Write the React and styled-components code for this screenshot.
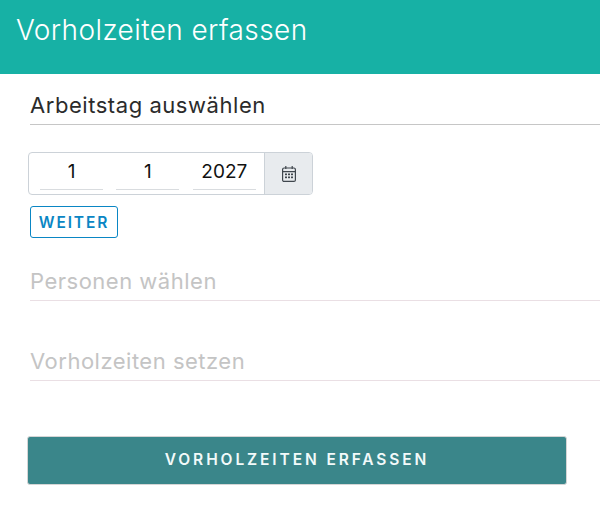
import React from "react";
import styled, { createGlobalStyle } from "styled-components";

const Global = createGlobalStyle`
  html, body { margin: 0; padding: 0; background: #fff; }
  body { font-family: Inter, "Liberation Sans", sans-serif; width: 600px; height: 512px; overflow: hidden; }
`;

const Header = styled.header`
  height: 74px;
  background: #17b1a5;
  padding: 14px 0 0 16px;
  box-sizing: border-box;
`;
const Title = styled.h1`
  margin: 0;
  font-size: 28px;
  line-height: 33px;
  font-weight: 300;
  color: #fff;
  letter-spacing: 0.4px;
`;
const Main = styled.main`
  padding: 18px 0 0 30px;
`;
const SectionHead = styled.h2`
  margin: 0 0 ${p => p.$gap}px;
  height: ${p => p.$h}px;
  box-sizing: border-box;
  border-bottom: 1px solid ${p => (p.$muted ? "#eadfe4" : "#c6c6c6")};
  font-size: 22px;
  line-height: ${p => (p.$muted ? 35 : 27)}px;
  font-weight: 400;
  letter-spacing: ${p => (p.$muted ? 0.5 : 0.55)}px;
  color: ${p => (p.$muted ? "#c4c4c4" : "#2b2b2b")};
`;
const DateGroup = styled.div`
  display: flex;
  width: 285px;
  height: 43px;
  margin-left: -2px;
  box-sizing: border-box;
  border: 1px solid #ccd2d8;
  border-radius: 4px;
  overflow: hidden;
`;
const Fields = styled.div`
  flex: 1;
  min-width: 0;
  display: flex;
  gap: 13.4px;
  padding-left: 11px;
`;
const Field = styled.div`
  flex: none;
  width: 63px;
  height: 37px;
  box-sizing: border-box;
  border-bottom: 1px solid #d9dcdf;
  text-align: center;
  font-size: 19px;
  line-height: 37px;
  color: #111;
`;
const Addon = styled.div`
  width: 48px;
  box-sizing: border-box;
  flex: none;
  display: flex;
  align-items: center;
  justify-content: center;
  background: #e8ebee;
  border-left: 1px solid #ccd2d8;
  color: #3f464d;
`;
const NextButton = styled.button`
  display: block;
  width: 88px;
  height: 32px;
  margin: 11px 0 26px;
  padding: 0;
  background: #fff;
  border: 1px solid #0a86c4;
  border-radius: 3px;
  color: #0a86c4;
  font: 600 15.5px Inter, "Liberation Sans", sans-serif;
  letter-spacing: 1.9px;
`;
const Submit = styled.button`
  display: block;
  width: 540px;
  height: 49px;
  margin: 55px 0 0 -3px;
  padding: 0 0 3px;
  background: #3a868a;
  border: 1px solid #d5d5d5;
  border-radius: 3px;
  color: #f2fafa;
  font: 600 15.5px Inter, "Liberation Sans", sans-serif;
  letter-spacing: 2.9px;
`;

const CalendarIcon = () => (
  <svg width="16" height="18" viewBox="0 0 16 18" fill="none" stroke="currentColor" strokeWidth="1.2">
    <rect x="1.6" y="3" width="12.8" height="13.4" rx="1.5" />
    <path d="M1.6 6.6h12.8M4.8 1v3M11.2 1v3" />
    <g fill="currentColor" stroke="none">
      <rect x="4" y="8.5" width="2" height="1.7" />
      <rect x="7" y="8.5" width="2" height="1.7" />
      <rect x="10" y="8.5" width="2" height="1.7" />
      <rect x="4" y="11.5" width="2" height="1.7" />
      <rect x="7" y="11.5" width="2" height="1.7" />
      <rect x="10" y="11.5" width="2" height="1.7" />
    </g>
  </svg>
);

export default function App() {
  return (
    <>
      <Global />
      <Header><Title>Vorholzeiten erfassen</Title></Header>
      <Main>
        <SectionHead $h={33} $gap={27}>Arbeitstag auswählen</SectionHead>
        <DateGroup>
          <Fields>
            <Field>1</Field>
            <Field>1</Field>
            <Field>2027</Field>
          </Fields>
          <Addon><CalendarIcon /></Addon>
        </DateGroup>
        <NextButton>WEITER</NextButton>
        <SectionHead $muted $h={37} $gap={43}>Personen wählen</SectionHead>
        <SectionHead $muted $h={37} $gap={0}>Vorholzeiten setzen</SectionHead>
        <Submit>VORHOLZEITEN ERFASSEN</Submit>
      </Main>
    </>
  );
}
